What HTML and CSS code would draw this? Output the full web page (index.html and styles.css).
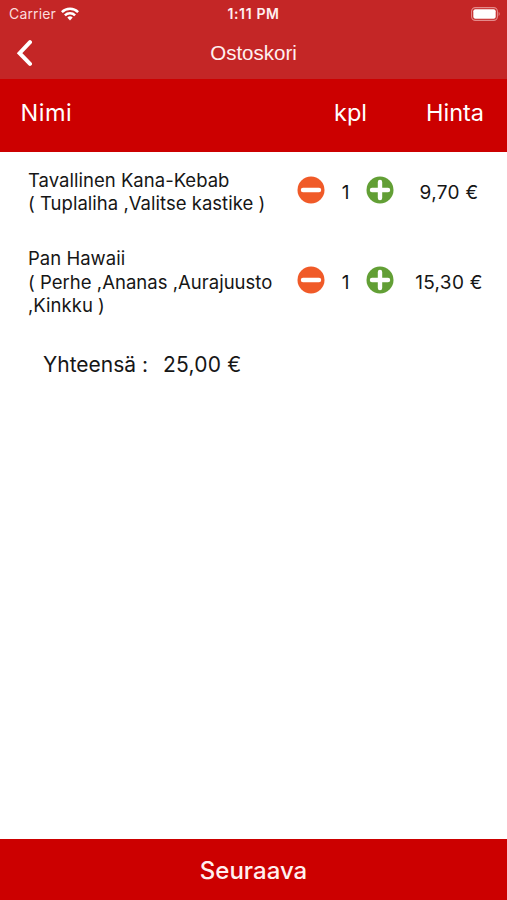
FILE: index.html
```html
<!DOCTYPE html>
<html lang="fi">
<head>
<meta charset="utf-8">
<meta name="viewport" content="width=device-width, initial-scale=1">
<title>Ostoskori</title>
<link rel="stylesheet" href="styles.css">
</head>
<body>
<div class="app">
  <header class="top">
    <div class="status">
      <div class="carrier"><span class="carrier-name">Carrier</span>
        <svg class="wifi" viewBox="0 0 18 14" width="18" height="14" fill="none" stroke="#fff" stroke-width="2.5"><path d="M.9 5.2a11.4 11.4 0 0 1 16.2 0"/><path d="M3.9 8.4a7.2 7.2 0 0 1 10.2 0"/><path d="M6.3 10.6a3.9 3.9 0 0 1 5.4 0L9 13.4z" fill="#fff" stroke="none"/></svg>
      </div>
      <span class="clock">1:11 PM</span>
      <svg class="battery" viewBox="0 0 30 14" width="30" height="14"><rect x=".6" y=".6" width="25.8" height="12.8" rx="3.8" fill="none" stroke="#e48b8b" stroke-width="1.1"/><rect x="2.3" y="2.3" width="22.4" height="9.4" rx="2" fill="#fff"/><path d="M27.6 4.8q2.2 2.2 0 4.4z" fill="#e48b8b"/></svg>
    </div>
    <nav class="nav">
      <svg class="back" viewBox="0 0 16 28" width="16" height="28" fill="none" stroke="#fff" stroke-width="4" stroke-linecap="round" stroke-linejoin="miter"><path d="M14 3.2L3.6 14.2l10.4 10.6"/></svg>
      <h1 class="title">Ostoskori</h1>
      <span></span>
    </nav>
  </header>
  <div class="columns head">
    <span class="head-name">Nimi</span><span class="head-qty">kpl</span><span class="head-price">Hinta</span>
  </div>
  <main class="cart">
    <div class="columns item">
      <div class="name">Tavallinen Kana-Kebab<br>( Tuplaliha ,Valitse kastike )</div>
      <div class="qty">
        <svg viewBox="0 0 28 28" width="28" height="28"><circle cx="14" cy="14" r="13.5" fill="#f05a28"/><path d="M6 14h16" stroke="#fff" stroke-width="4.4" stroke-linecap="round"/></svg>
        <span class="count">1</span>
        <svg viewBox="0 0 28 28" width="28" height="28"><circle cx="14" cy="14" r="13.5" fill="#629f35"/><path d="M6 14h16M14 6v16" stroke="#fff" stroke-width="4.4" stroke-linecap="round"/></svg>
      </div>
      <div class="price">9,70 €</div>
    </div>
    <div class="columns item">
      <div class="name">Pan Hawaii<br>( Perhe ,Ananas ,Aurajuusto<br>,Kinkku )</div>
      <div class="qty">
        <svg viewBox="0 0 28 28" width="28" height="28"><circle cx="14" cy="14" r="13.5" fill="#f05a28"/><path d="M6 14h16" stroke="#fff" stroke-width="4.4" stroke-linecap="round"/></svg>
        <span class="count">1</span>
        <svg viewBox="0 0 28 28" width="28" height="28"><circle cx="14" cy="14" r="13.5" fill="#629f35"/><path d="M6 14h16M14 6v16" stroke="#fff" stroke-width="4.4" stroke-linecap="round"/></svg>
      </div>
      <div class="price">15,30 €</div>
    </div>
    <div class="total"><span class="total-label">Yhteensä :</span><span class="total-sum">25,00 €</span></div>
  </main>
  <footer class="next">Seuraava</footer>
</div>
</body>
</html>
```

FILE: styles.css
```css
* { box-sizing: border-box; }
body {
  margin: 0;
  background: #fff;
  color: #161616;
  font-family: Inter, "Liberation Sans", sans-serif;
}
svg { display: block; flex: none; }
.app { display: flex; flex-direction: column; height: 900px; }
.top { height: 79px; background: #c42626; color: #fff; }
.status {
  display: grid;
  grid-template-columns: 1fr auto 1fr;
  align-items: center;
  height: 27px;
  padding: 0 6px 0 9px;
}
.carrier { display: flex; align-items: center; gap: 5px; }
.carrier-name { font-size: 14px; letter-spacing: 0.15px; color: #fbdcdc; }
.clock { margin-right: 3px; font-size: 14px; letter-spacing: 0.65px; font-weight: 600; color: #fff0f0; }
.battery { justify-self: end; }
.nav {
  display: grid;
  grid-template-columns: 1fr auto 1fr;
  align-items: center;
  height: 52px;
  padding: 0 16px 1px;
}
.title {
  margin: 0;
  font: 400 20.5px/24px "Liberation Sans", sans-serif;
  color: #fff0f0;
}
.columns { display: grid; grid-template-columns: 297px 97px 1fr; }
.head {
  height: 73px;
  align-items: center;
  padding-bottom: 6px;
  background: #c00;
  color: #fff;
  font-size: 23.5px;
}
.head-name { padding-left: 20.5px; letter-spacing: 0.5px; }
.head-qty { padding-left: 37px; }
.head-price { padding-left: 32px; }
.cart { flex: 1; padding-top: 17px; }
.item { align-items: center; margin-bottom: 32px; }
.name { padding-left: 28px; font-size: 18.5px; line-height: 23.2px; letter-spacing: 0.02px; white-space: nowrap; }
.qty { display: flex; align-items: center; justify-content: space-between; height: 28px; margin-bottom: 4px; }
.count { font-size: 19px; line-height: 24px; padding-top: 5px; }
.price { padding: 1px 3px 0 0; text-align: center; font-size: 19px; letter-spacing: 0.3px; line-height: 24px; }
.total { display: flex; gap: 15px; padding: 2px 0 0 43px; font-size: 21px; line-height: 28px; }
.total-sum { letter-spacing: 0.2px; }
.next {
  display: flex;
  align-items: center;
  justify-content: center;
  height: 61px;
  padding-top: 1px;
  background: #c00;
  color: #fff0f0;
  font-size: 24px;
  font-weight: 500;
}
```
